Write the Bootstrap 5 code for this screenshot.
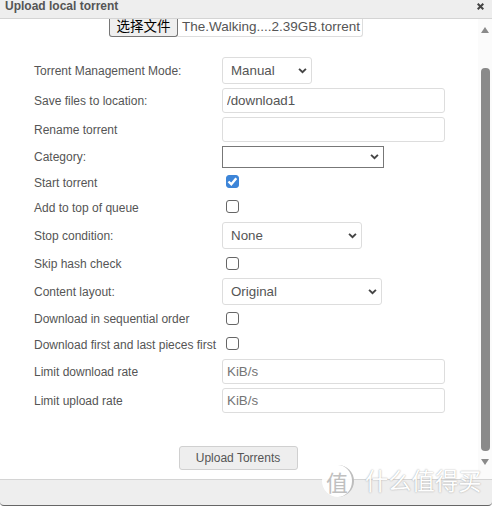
<!DOCTYPE html>
<html lang="en">
<head>
<meta charset="utf-8">
<title>Upload local torrent</title>
<link rel="stylesheet" href="https://cdn.jsdelivr.net/npm/bootstrap@5.3.0/dist/css/bootstrap.min.css">
<style>
html,body{height:100%;overflow:hidden}
body{width:492px;height:506px;background:#fff;font-family:"Liberation Sans",Arial,sans-serif;color:#555;position:relative}
.dlg-title{height:19px;background:#eee;border-bottom:1px solid #d4d4d4;font-size:12px;font-weight:700;line-height:12px;padding-left:5px;color:#555}
.dlg-close{padding:3px 8px 0 0;line-height:0}
.dlg-body{height:460px}
.dlg-main{width:478px}
.file-row{height:18px;margin-bottom:18px;padding-left:109px}
.file-btn{width:69px;height:18px;border:1px solid #767676;border-top:0;background:#efefef;border-radius:0 0 3px 3px;font:13.5px/14px "Liberation Sans","Noto Sans CJK SC",sans-serif;color:#000;padding:0 0 2px}
.file-name{width:185px;height:18px;border:1px solid #ddd;border-width:0 1px 1px 0;border-radius:0 0 3px 0;font-size:13.5px;line-height:15px;color:#555;padding-left:4px;white-space:nowrap}
.opt-list{padding-left:34px}
.opt-row{font-size:12px;color:#555}
.h31{height:31px}.h29{height:29px}.h26{height:26px}.h25{height:25px}
.opt-label{width:188px;flex:none;white-space:nowrap}
.txt-field,.sel-field{font-family:"Liberation Sans",Arial,sans-serif;font-size:13.33px;color:#555;border:1px solid #ddd;border-radius:3px;padding:0 4px;height:25px;width:223px;box-shadow:none;min-height:0}
.txt-field::placeholder{color:#757575;opacity:1}
.sel-field{height:27px;padding:0 0 0 8px;background-position:right 4px center;background-size:9px 6px;background-image:url("data:image/svg+xml,%3csvg xmlns='http://www.w3.org/2000/svg' viewBox='0 0 10 7'%3e%3cpath fill='none' stroke='%23444' stroke-width='2.2' d='M1 1l4 4 4-4'/%3e%3c/svg%3e")}
.w-mode{width:90px}.w-stop{width:140px}.w-layout{width:160px}
.w-cat{width:162px;height:22px;border-color:#777;border-radius:0}
.tick{width:13px;height:13px;margin:-2px 0 0 4px;border:1px solid #666;border-radius:2px;box-shadow:none}
.tick:checked{background-color:#3d85d8;border-color:#3d85d8;background-size:13px 13px;background-image:url("data:image/svg+xml,%3csvg xmlns='http://www.w3.org/2000/svg' viewBox='0 0 13 13'%3e%3cpath fill='none' stroke='%23fff' stroke-width='2.4' d='M2.5 6.5l2.8 2.8 5-6'/%3e%3c/svg%3e")}
.send-wrap{margin-top:30px}
.send-btn{width:119px;height:24px;padding:0;font-size:12px;color:#555;background:#eee;border:1px solid #d0d0d0;border-radius:3px;margin-left:-2px}
.sbar{width:14px;background:#fbfbfb;padding-left:3px}
.sbar-up,.sbar-down{width:0;height:0;border-left:4.5px solid transparent;border-right:4.5px solid transparent}
.sbar-up{border-bottom:6px solid #8a8a8a;margin-top:8px}
.sbar-thumb{width:9px;height:383px;background:#8a8a8a;margin:35px 0 8px 0;border-radius:4px}
.sbar-down{border-top:6px solid #8a8a8a}
.dlg-foot{height:27px;background:#eee;border-top:1px solid #d4d4d4;border-bottom:1px solid #666;border-radius:0 0 4px 4px}
.wm{position:absolute;left:322px;top:465px;color:#fff;text-shadow:0 0 1.5px #8f8f8f;font-family:"Noto Sans CJK SC",sans-serif;font-size:23.3px;line-height:31px;opacity:.95;gap:11px}
.wm-logo{width:32px;height:32px;border-radius:50%;background:#fff;border-right:2px solid #bbb;font-size:22px;color:#bdbdbd;text-shadow:none}
</style>
</head>
<body>
<div class="dlg-title d-flex justify-content-between"><span>Upload local torrent</span><span class="dlg-close"><svg width="7" height="7" viewBox="0 0 7 7"><path d="M.7.7l5.6 5.6M6.3.7L.7 6.3" stroke="#444" stroke-width="2" fill="none"/></svg></span></div>
<div class="dlg-body d-flex">
  <div class="dlg-main">
    <div class="file-row d-flex"><button type="button" class="file-btn">选择文件</button><div class="file-name">The.Walking....2.39GB.torrent</div></div>
    <form class="opt-list d-flex flex-column">
      <div class="opt-row h31 d-flex align-items-center"><label class="opt-label">Torrent Management Mode:</label><select class="form-select sel-field w-mode"><option>Manual</option></select></div>
      <div class="opt-row h29 d-flex align-items-center"><label class="opt-label">Save files to location:</label><input class="form-control txt-field" value="/download1"></div>
      <div class="opt-row h29 d-flex align-items-center"><label class="opt-label">Rename torrent</label><input class="form-control txt-field"></div>
      <div class="opt-row h26 d-flex align-items-center"><label class="opt-label">Category:</label><select class="form-select sel-field w-cat"><option></option></select></div>
      <div class="opt-row h25 d-flex align-items-center"><label class="opt-label">Start torrent</label><input type="checkbox" class="form-check-input tick" checked></div>
      <div class="opt-row h25 d-flex align-items-center"><label class="opt-label">Add to top of queue</label><input type="checkbox" class="form-check-input tick"></div>
      <div class="opt-row h31 d-flex align-items-center"><label class="opt-label">Stop condition:</label><select class="form-select sel-field w-stop"><option>None</option></select></div>
      <div class="opt-row h26 d-flex align-items-center"><label class="opt-label">Skip hash check</label><input type="checkbox" class="form-check-input tick"></div>
      <div class="opt-row h29 d-flex align-items-center"><label class="opt-label">Content layout:</label><select class="form-select sel-field w-layout"><option>Original</option></select></div>
      <div class="opt-row h26 d-flex align-items-center"><label class="opt-label">Download in sequential order</label><input type="checkbox" class="form-check-input tick"></div>
      <div class="opt-row h25 d-flex align-items-center"><label class="opt-label">Download first and last pieces first</label><input type="checkbox" class="form-check-input tick"></div>
      <div class="opt-row h29 d-flex align-items-center"><label class="opt-label">Limit download rate</label><input class="form-control txt-field" placeholder="KiB/s"></div>
      <div class="opt-row h29 d-flex align-items-center"><label class="opt-label">Limit upload rate</label><input class="form-control txt-field" placeholder="KiB/s"></div>
    </form>
    <div class="send-wrap text-center"><button type="button" class="btn send-btn">Upload Torrents</button></div>
  </div>
  <div class="sbar">
    <div class="sbar-up"></div>
    <div class="sbar-thumb"></div>
    <div class="sbar-down"></div>
  </div>
</div>
<div class="dlg-foot"></div>
<div class="wm d-flex"><span class="wm-logo d-flex align-items-center justify-content-center">值</span><span>什么值得买</span></div>
</body>
</html>
